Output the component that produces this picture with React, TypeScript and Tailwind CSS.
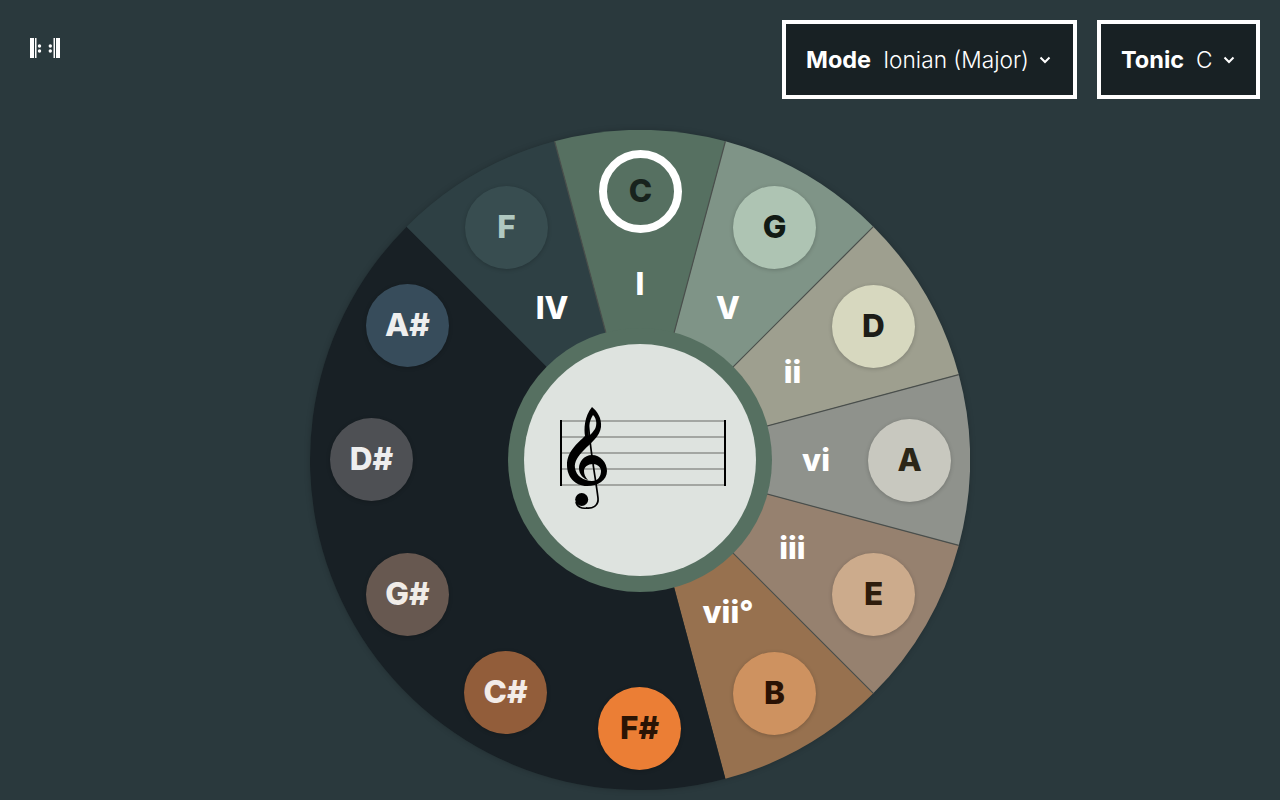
const CX = 330;
const CY = 330;

const wedges = [
  { from: -15, to: 15, fill: "#567061" },
  { from: 15, to: 45, fill: "#7f9487" },
  { from: 45, to: 75, fill: "#9e9f8f" },
  { from: 75, to: 105, fill: "#8f928c" },
  { from: 105, to: 135, fill: "#96816f" },
  { from: 135, to: 165, fill: "#97714f" },
  { from: 165, to: 315, fill: "#182025" },
  { from: 315, to: 345, fill: "#2e4044" },
];

const dividers = [-15, 15, 45, 75, 105, 135];

// left/top of each note inside the wheel
const notes = [
  { name: "C", left: 289, top: 20, bg: "bg-[#567061]", text: "text-[#18231d]", ring: true },
  { name: "G", left: 423, top: 56, bg: "bg-[#aec4b3]", text: "text-[#111a14]" },
  { name: "D", left: 522, top: 155, bg: "bg-[#d7d8bf]", text: "text-[#1d1d18]" },
  { name: "A", left: 558, top: 289, bg: "bg-[#c8c8bf]", text: "text-[#2b2618]" },
  { name: "E", left: 522, top: 423, bg: "bg-[#ccab8c]", text: "text-[#2e1c0c]" },
  { name: "B", left: 423, top: 522, bg: "bg-[#ce9260]", text: "text-[#2a1204]" },
  { name: "F#", left: 288, top: 557, bg: "bg-[#eb7e35]", text: "text-[#2a1404]" },
  { name: "C#", left: 154, top: 521, bg: "bg-[#925d3a]", text: "text-[#f3ece8]" },
  { name: "G#", left: 56, top: 423, bg: "bg-[#675850]", text: "text-[#f0ece8]" },
  { name: "D#", left: 20, top: 288, bg: "bg-[#4e5054]", text: "text-[#eeeeee]" },
  { name: "A#", left: 56, top: 154, bg: "bg-[#374c5b]", text: "text-[#eeeeee]" },
  { name: "F", left: 155, top: 56, bg: "bg-[#384d50]", text: "text-[#b0c8c0]" },
];

const degrees = [
  { name: "I", angle: 0 },
  { name: "V", angle: 30 },
  { name: "ii", angle: 60 },
  { name: "vi", angle: 90 },
  { name: "iii", angle: 120 },
  { name: "vii°", angle: 150 },
  { name: "IV", angle: 330 },
];

const polar = (angle: number, r: number) => {
  const a = (angle * Math.PI) / 180;
  return { x: CX + r * Math.sin(a), y: CY - r * Math.cos(a) };
};

const wedgePath = (from: number, to: number) => {
  const a = polar(from, 330);
  const b = polar(to, 330);
  const large = to - from > 180 ? 1 : 0;
  return `M${CX},${CY} L${a.x},${a.y} A330,330 0 ${large} 1 ${b.x},${b.y} Z`;
};

const Clef = () => (
  <svg className="absolute left-[36px] top-[61px]" width="55" height="107" viewBox="0 0 55 107" fill="none">
    {/* top loop, diagonal and outer bowl */}
    <path
      fillRule="evenodd"
      fill="#000"
      d="M32,2 C37,6 42,13 41,22 C40,31 31,38 24,45 C18,51 14,57 15,63 C16,71 24,76 32,76 C38,76 41,71 41,66 L47,66 C47,75 38,81 27,81 C15,81 7,72 7,60 C7,46 18,38 25,31 C24,24 24,12 32,2 Z M33,10 C37,14 37,20 35,24 C33,27 31,29 29,31 C28,25 29,16 33,10 Z"
    />
    {/* inner spiral */}
    <path
      fill="#000"
      d="M47,66 C47,57 40,50 32,50 C24,50 19,57 19,63 C19,70 24,74 28,75 C25,72 24,69 24,66 C24,62 28,59 33,59 C37,59 41,62 41,66 Z"
    />
    {/* stem and tail */}
    <path d="M28,12 C29,40 36,75 38,93 C39,101 32,104 26,103" stroke="#000" strokeWidth="1.7" />
    <path d="M16,97 C17,102 22,104 27,103" stroke="#000" strokeWidth="1.7" />
    <circle cx="21.7" cy="94.5" r="6.5" fill="#000" />
  </svg>
);

const Wheel = () => (
  <div className="relative w-[660px] h-[660px] rounded-full shadow-[0_0_6px_rgba(0,0,0,0.2)]">
    <svg className="absolute inset-0" width="660" height="660" viewBox="0 0 660 660">
      {wedges.map((w) => (
        <path key={w.from} d={wedgePath(w.from, w.to)} fill={w.fill} />
      ))}
      {dividers.map((angle) => {
        const p = polar(angle, 330);
        return <line key={angle} x1={CX} y1={CY} x2={p.x} y2={p.y} stroke="#4a4f4c" strokeWidth="1.2" />;
      })}
    </svg>

    {degrees.map((d) => {
      const p = polar(d.angle, 176);
      return (
        <div
          key={d.name}
          className="absolute -translate-x-1/2 -translate-y-1/2 text-[31px] font-extrabold leading-none text-white"
          style={{ left: p.x, top: p.y - 1 }}
        >
          {d.name}
        </div>
      );
    })}

    {notes.map((n) => (
      <div
        key={n.name}
        className={`absolute w-[83px] h-[83px] pb-0.5 rounded-full flex items-center justify-center text-[31.5px] font-extrabold ${n.bg} ${n.text} ${n.ring ? "border-[8px] border-white" : "shadow-[0_1px_4px_rgba(0,0,0,0.2)]"}`}
        style={{ left: n.left, top: n.top }}
      >
        {n.name}
      </div>
    ))}

    <div className="absolute left-[198px] top-[198px] w-[264px] h-[264px] rounded-full bg-[#567061] flex items-center justify-center">
      <div className="relative w-[232px] h-[232px] rounded-full bg-[#dee3df]">
        <div className="absolute left-[36px] top-[76px] w-[166px] h-[66px] flex flex-col justify-between border-x-2 border-black">
          <div className="h-0.5 bg-[#a3a6a2]" />
          <div className="h-0.5 bg-[#a3a6a2]" />
          <div className="h-0.5 bg-[#a3a6a2]" />
          <div className="h-0.5 bg-[#a3a6a2]" />
          <div className="h-0.5 bg-[#a3a6a2]" />
        </div>
        <Clef />
      </div>
    </div>
  </div>
);

const Select = ({ label, value, width }: { label: string; value: string; width: string }) => (
  <div className={`h-[79px] flex items-center border-4 border-white bg-[#182124] pl-5 pt-px text-white ${width}`}>
    <span className="font-bold mr-3 text-[23.5px]">{label}</span>
    <span className="font-light text-[22.7px]">{value}</span>
    <svg className="ml-2.5" width="12" height="12" viewBox="0 0 12 12" fill="none" stroke="#fff" strokeWidth="2">
      <path d="M1.5 3.5 L6 8 L10.5 3.5" />
    </svg>
  </div>
);

export default function App() {
  return (
    <div className="relative w-[1280px] h-[800px] overflow-hidden bg-[#2a393d] font-['Inter',sans-serif]">
      <header className="flex justify-between pl-[30px] pr-5 pt-5">
        <svg className="mt-[18px]" width="30" height="20" viewBox="0 0 30 20" fill="#fff">
          <rect x="0" y="0" width="4" height="20" />
          <rect x="5" y="0" width="1.5" height="20" />
          <circle cx="9.5" cy="8" r="1.7" />
          <circle cx="9.5" cy="13" r="1.7" />
          <circle cx="20.3" cy="8" r="1.7" />
          <circle cx="20.3" cy="13" r="1.7" />
          <rect x="23.5" y="0" width="1.5" height="20" />
          <rect x="26" y="0" width="4" height="20" />
        </svg>
        <div className="flex gap-5">
          <Select label="Mode" value="Ionian (Major)" width="w-[295px]" />
          <Select label="Tonic" value="C" width="w-[163px]" />
        </div>
      </header>
      <div className="flex justify-center mt-[31px]">
        <Wheel />
      </div>
    </div>
  );
}
